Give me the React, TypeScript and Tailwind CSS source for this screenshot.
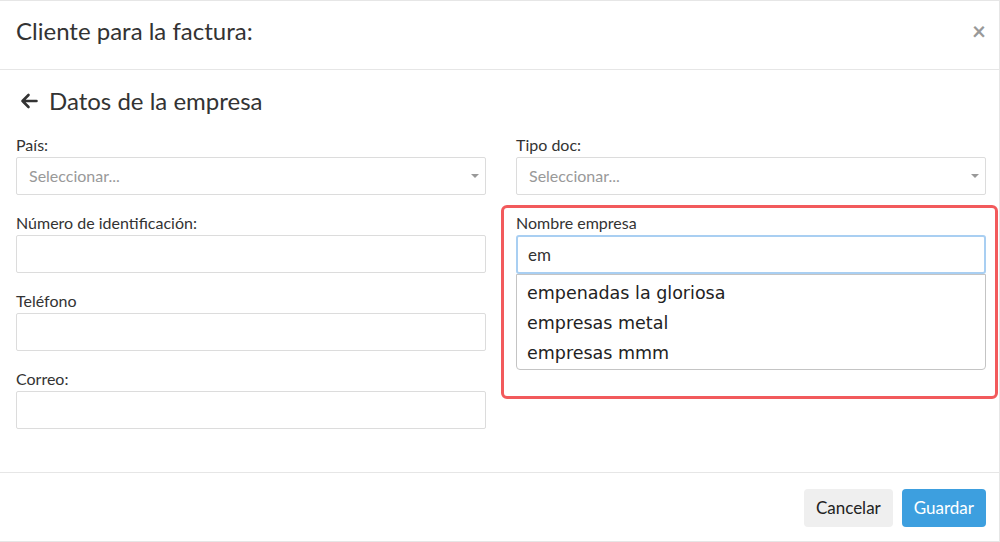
import React from "react";

const lato = { fontFamily: "Lato, 'Open Sans', sans-serif" };

const Label = ({ children }: { children: React.ReactNode }) => (
  <label className="block text-[16px] leading-5 text-[#333] mb-[2px]">{children}</label>
);

const SelectBox = () => (
  <div className="relative h-[38px] border border-[#dcdcdc] rounded-[2px] bg-white flex items-center pl-3 pr-8">
    <span className="text-[16px] text-[#999]">Seleccionar...</span>
    <span className="absolute right-[6px] top-1/2 -translate-y-1/2 w-0 h-0 border-l-[4px] border-r-[4px] border-t-[4px] border-l-transparent border-r-transparent border-t-[#999]" />
  </div>
);

const TextInput = () => <div className="h-[38px] border border-[#dcdcdc] rounded-[2px] bg-white" />;

const Field = ({ label, children }: { label: string; children: React.ReactNode }) => (
  <div>
    <Label>{label}</Label>
    {children}
  </div>
);

const suggestions = ["empenadas la gloriosa", "empresas metal", "empresas mmm"];

export default function App() {
  return (
    <div style={lato} className="w-[1000px] h-[542px] bg-white flex flex-col border-t border-b border-r border-[#e6e6e6] text-[#333] overflow-hidden">
      <div className="h-[69px] flex items-center justify-between pl-4 pr-[13px] pb-[8px] border-b border-[#e6e6e6] shrink-0">
        <h2 className="text-[24px] text-[#333] leading-none">Cliente para la factura:</h2>
        <span className="text-[#999] text-[24px] font-bold leading-none">×</span>
      </div>

      <div className="flex-1 pl-4 pr-[13px] pt-4">
        <div className="flex items-center gap-[11px] h-[30px] pl-1">
          <svg width="18" height="16" viewBox="0 0 18 16" className="text-[#333]">
            <path d="M16.5 8H2.5M8.5 2L2.5 8l6 6" fill="none" stroke="currentColor" strokeWidth="2.6" strokeLinecap="round" strokeLinejoin="round" />
          </svg>
          <h3 className="text-[24px] text-[#333] leading-none">Datos de la empresa</h3>
        </div>

        <div className="grid grid-cols-2 gap-x-[30px] mt-[19px]">
          <div className="flex flex-col gap-[18px]">
            <Field label="País:">
              <SelectBox />
            </Field>
            <Field label="Número de identificación:">
              <TextInput />
            </Field>
            <Field label="Teléfono">
              <TextInput />
            </Field>
            <Field label="Correo:">
              <TextInput />
            </Field>
          </div>

          <div className="flex flex-col gap-[18px]">
            <Field label="Tipo doc:">
              <SelectBox />
            </Field>
            <div className="relative">
              <div className="absolute -left-[15px] -right-[12px] -top-[8px] -bottom-[29px] border-[3px] border-[#f25a5c] rounded-[6px] pointer-events-none" />
              <Label>Nombre empresa</Label>
              <div className="h-[39px] border-2 border-[#a9cff2] rounded-[3px] bg-white flex items-center pl-[10px]">
                <span className="text-[17px] text-[#333]">em</span>
              </div>
              <ul
                className="border border-[#c4c4c4] rounded-b-[4px] bg-white pt-[3px] h-[96px]"
                style={{ fontFamily: "'DejaVu Sans', Verdana, sans-serif" }}
              >
                {suggestions.map((s) => (
                  <li key={s} className="h-[30px] flex items-center pl-[10px] text-[17.5px] text-[#222]">
                    {s}
                  </li>
                ))}
              </ul>
            </div>
          </div>
        </div>
      </div>

      <div className="h-[69px] border-t border-[#e6e6e6] flex items-start justify-end gap-[9px] pr-[13px] pt-4 shrink-0">
        <button className="h-[38px] px-3 rounded-[4px] bg-[#efefef] text-[17px] text-[#222]">Cancelar</button>
        <button className="h-[38px] px-3 rounded-[4px] bg-[#3d9fdf] text-[17px] text-white">Guardar</button>
      </div>
    </div>
  );
}
